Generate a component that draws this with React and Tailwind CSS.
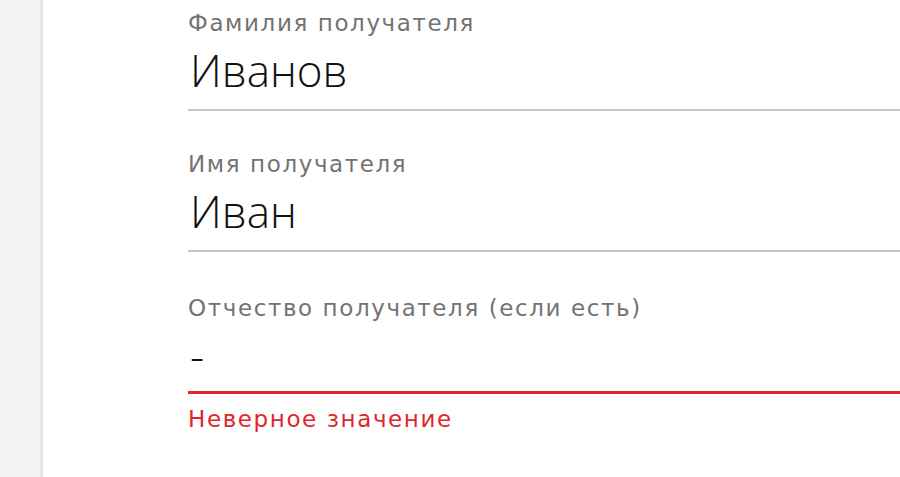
import React from 'react';

const Field = ({ label, value, error, className = '' }) => (
  <div className={className}>
    <div className="font-['DejaVu_Sans',sans-serif] text-[23px] leading-[30px] tracking-[1.6px] text-[#737373]">{label}</div>
    <div
      className={`h-[64px] pl-[2px] text-[44px] font-light leading-[64px] text-[#111] box-content ${
        error ? 'border-b-[3px] border-[#e0262b] pb-[4px]' : 'border-b-[2px] border-[#c8c8c8] pb-[7px]'
      }`}
    >
      {value}
    </div>
  </div>
);

export default function App() {
  return (
    <div className="flex h-[477px] w-[900px] overflow-hidden bg-white font-['Open_Sans',sans-serif]">
      {/* side strip */}
      <div className="w-[43px] shrink-0 bg-[#f2f2f0] border-r-[3px] border-[#e8e8e6]" />

      {/* form */}
      <div className="flex-1 pl-[145px]">
        <div className="mt-[-30px]">
          <Field label="Фамилия получателя" value="Иванов" className="pt-[38px]" />
          <Field label="Имя получателя" value="Иван" className="pt-[38px]" />
          <Field label="Отчество получателя (если есть)" value="-" error className="pt-[41px]" />
          <div className="mt-[10px] font-['DejaVu_Sans',sans-serif] text-[23px] leading-[30px] tracking-[1.6px] text-[#e0262b]">
            Неверное значение
          </div>
        </div>
      </div>
    </div>
  );
}
